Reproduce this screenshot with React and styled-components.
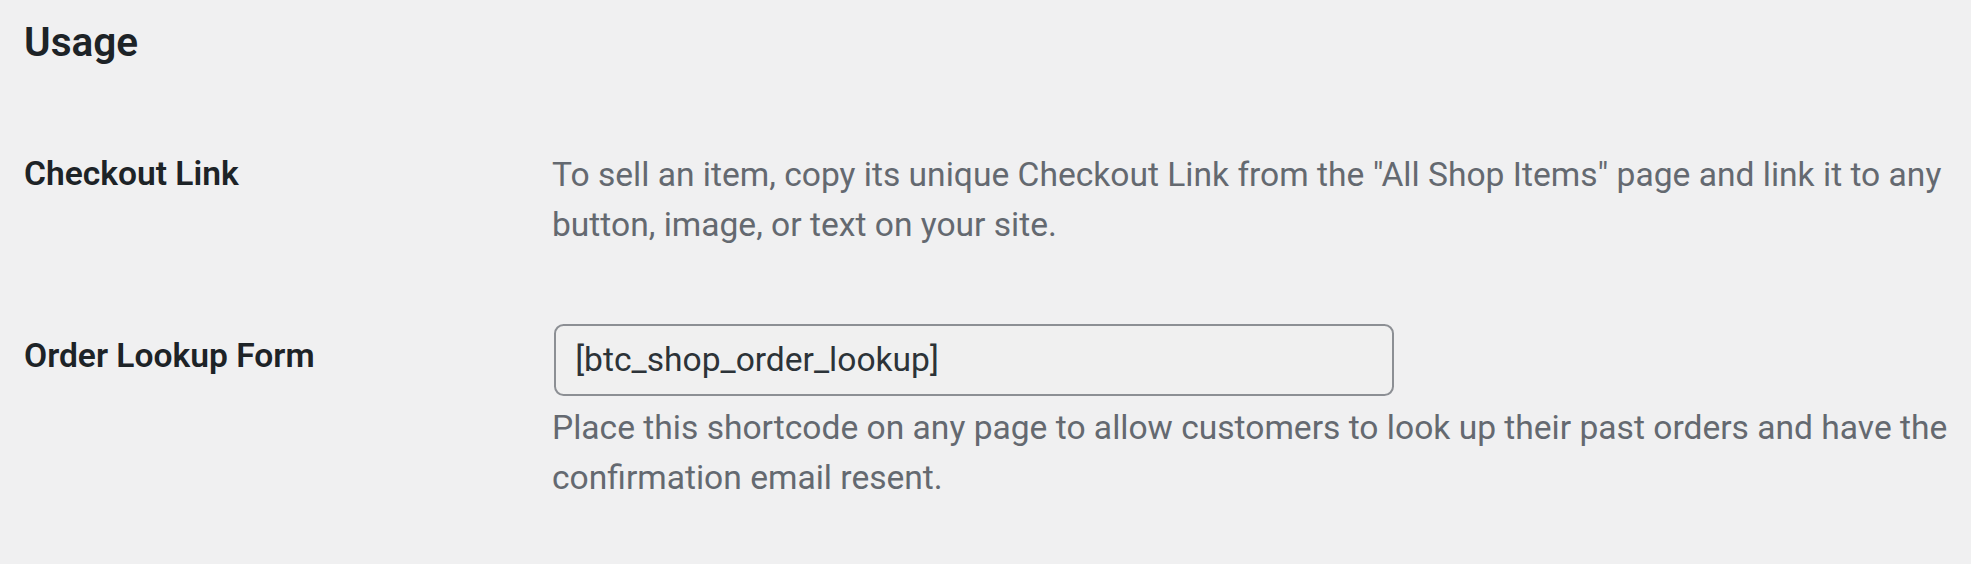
import React from "react";
import styled, { createGlobalStyle } from "styled-components";

const Global = createGlobalStyle`
  html, body {
    margin: 0;
    padding: 0;
    background: #f0f0f1;
  }
  body {
    font-family: Roboto, "Noto Sans", "Liberation Sans", sans-serif;
    color: #1d2327;
  }
`;

const Wrap = styled.div`
  padding: 0 10px 0 24px;
  box-sizing: border-box;
  width: 100%;
`;

const Heading = styled.h2`
  font-size: 40.56px;
  line-height: 56.8px;
  font-weight: 600;
  color: #1d2327;
  margin: 14.4px 0 33.2px 0;
`;

const Table = styled.div`
  display: flex;
  flex-direction: column;
`;

const Row = styled.div`
  display: grid;
  grid-template-columns: 504px 1fr;
  align-items: start;
`;

const Label = styled.div`
  padding: 48px 24px 48px 0;
  font-size: 33.6px;
  line-height: 43.68px;
  font-weight: 600;
  color: #1d2327;
`;

const Field = styled.div`
  padding: 36px 0 36px 24px;
  min-width: 0;
`;

const Description = styled.p`
  margin: ${(p) => p.$mt || "9.6px"} 0 0 0;
  font-size: 33.6px;
  line-height: 50px;
  color: #646970;
`;

const Input = styled.input`
  display: block;
  box-sizing: border-box;
  width: 840px;
  height: 72px;
  margin: 2px 0 0 2px;
  padding: 0 19.2px;
  border: 2px solid #8c8f94;
  border-radius: 9.6px;
  background: #f0f0f0;
  color: #2c3338;
  font-family: Roboto, "Noto Sans", "Liberation Sans", sans-serif;
  font-size: 33.6px;
  outline: none;
`;

export default function App() {
  return (
    <>
      <Global />
      <Wrap>
        <Heading>Usage</Heading>
        <Table>
          <Row>
            <Label>Checkout Link</Label>
            <Field>
              <Description>
                To sell an item, copy its unique Checkout Link from the "All Shop Items" page and link it to any button, image, or text on your site.
              </Description>
            </Field>
          </Row>
          <Row>
            <Label>Order Lookup Form</Label>
            <Field>
              <Input type="text" readOnly defaultValue="[btc_shop_order_lookup]" />
              <Description $mt="7px">
                Place this shortcode on any page to allow customers to look up their past orders and have the confirmation email resent.
              </Description>
            </Field>
          </Row>
        </Table>
      </Wrap>
    </>
  );
}
